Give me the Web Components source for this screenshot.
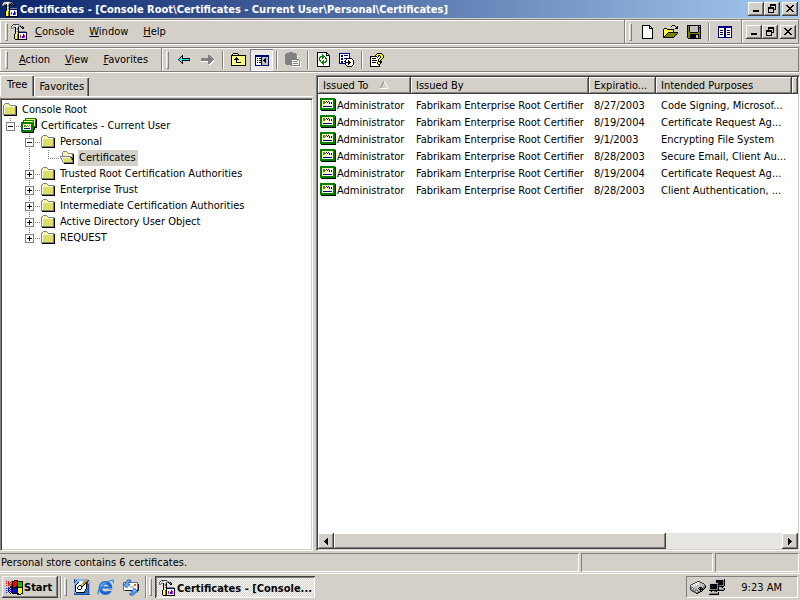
<!DOCTYPE html>
<html lang="en">
<head>
<meta charset="utf-8">
<title>Certificates</title>
<style>
:root{--face:#d4d0c8;--shade:#808080;--dark:#404040;--light:#fff;}
html,body{height:100%;margin:0}
body{font:11px/13px "DejaVu Sans Condensed","DejaVu Sans",sans-serif;color:#000;background:var(--face);display:flex;flex-direction:column;overflow:hidden}
main{flex:1;min-height:0;display:flex;gap:3px}
</style>
</head>
<body>
<title-bar>Certificates - [Console Root\Certificates - Current User\Personal\Certificates]</title-bar>
<tool-row>
  <tool-band grow><px-icon name="mmc"></px-icon><menu-item key="C">onsole</menu-item><menu-item key="W">indow</menu-item><menu-item key="H">elp</menu-item></tool-band>
  <tool-band tight><tool-button icon="new" label="New"></tool-button><tool-button icon="open" label="Open"></tool-button><tool-button icon="save" label="Save"></tool-button><tool-sep></tool-sep><tool-button icon="panes" label="New window"></tool-button></tool-band>
  <tool-band plain><window-buttons></window-buttons></tool-band>
</tool-row>
<tool-row>
  <tool-band class="menus"><menu-item key="A">ction</menu-item><menu-item key="V">iew</menu-item><menu-item key="F">avorites</menu-item></tool-band>
  <tool-band tight grow><tool-button icon="back" label="Back"></tool-button><tool-button icon="forward" label="Forward"></tool-button><tool-sep></tool-sep><tool-button icon="up" label="Up one level"></tool-button><tool-button icon="tree" label="Show console tree" pressed></tool-button><tool-sep></tool-sep><tool-button icon="paste" label="Paste"></tool-button><tool-sep></tool-sep><tool-button icon="refresh" label="Refresh"></tool-button><tool-button icon="export" label="Export list"></tool-button><tool-sep></tool-sep><tool-button icon="help" label="Help"></tool-button></tool-band>
</tool-row>
<main>
  <tree-pane>
    <tree-node icon="folder">Console Root</tree-node>
    <tree-node icon="certs" guides="e" box="-">Certificates - Current User</tree-node>
    <tree-node icon="folder" guides=" t" box="-">Personal</tree-node>
    <tree-node icon="folderopen" guides=" |e" selected>Certificates</tree-node>
    <tree-node icon="folder" guides=" t" box="+">Trusted Root Certification Authorities</tree-node>
    <tree-node icon="folder" guides=" t" box="+">Enterprise Trust</tree-node>
    <tree-node icon="folder" guides=" t" box="+">Intermediate Certification Authorities</tree-node>
    <tree-node icon="folder" guides=" t" box="+">Active Directory User Object</tree-node>
    <tree-node icon="folder" guides=" e" box="+">REQUEST</tree-node>
  </tree-pane>
  <cert-list></cert-list>
</main>
<status-bar>Personal store contains 6 certificates.</status-bar>
<task-bar>Certificates - [Console...</task-bar>

<script>
const PALETTE={K:'#000',W:'#fff',G:'#808080',L:'#c0c0c0',Y:'#ffff00',P:'#ffff84',F:'#dede63',O:'#808000',N:'#000080',E:'#008000',C:'#00ffff',R:'#ff0000',B:'#0000ff',M:'#ff00ff',A:'#87b4e8',S:'#f4f4a0',D:'#404040',T:'#2a78d8',V:'#00c800',Q:'#1c50a8',X:'#c89838',Z:'#ffff70'};
const ICONS={
mmc:`
..DDDDDD........
.DWLLWWLGG......
DWLLWWLGGKGK....
GLGGKWLK..KGK...
GG..KLGK...KK...
....KLGK........
....KWLK........
....KLGKGGGGGGG.
....KWLKNNNNNNNK
....KYPKWWWWWWWK
...KYPOKWWWWBWWK
...KYPOKWRWWBMWK
...KYPOKWRWBBMWK
...KYPOKWRWBBMWK
...KYYOKWWWWWWWK
....KKKKKKKKKKKK`,
new:`
KKKKKKKK....
KWWWWWWKK...
KWWWWWWKWK..
KWWWWWWKKKK.
KWWWWWWWWWK.
KWWWWWWWWWK.
KWWWWWWWWWK.
KWWWWWWWWWK.
KWWWWWWWWWK.
KWWWWWWWWWK.
KWWWWWWWWWK.
KWWWWWWWWWK.
KWWWWWWWWWK.
KKKKKKKKKKK.`,
open:`
.........KKK....
........K...K.K.
.............KK.
.KKK........KKK.
KPYPKKKKKKK.....
KYPYPYPYPYK.....
KPYPYPYPYPK.....
KYPYPKKKKKKKKKK.
KPYPKOOOOOOOOOK.
KYPKOOOOOOOOOK..
KPKOOOOOOOOOK...
KKOOOOOOOOOK....
KKKKKKKKKKK.....`,
save:`
KKKKKKKKKKKKKK
KOKLLLLLLLLKLK
KOKLLLLLLLLKKK
KOKLLLLLLLLKOK
KOKLLLLLLLLKOK
KOKLLLLLLLLKOK
KOKLLLLLLLLKOK
KOOKKKKKKKKOOK
KOOOOOOOOOOOOK
KOOKKKKKKKKKOK
KOOKKKKKKLLKOK
KOOKKKKKKLLKOK
KOOKKKKKKLLKOK
.KKKKKKKKKKKKK`,
panes:`
NNNNNNNNNNNNNN
NNNNNNNNNNNNNN
NWWWWWNNWWWWWN
NWWWWWNNWWWWWN
NWKKKWNNWKKKWN
NWWWWWNNWWWWWN
NWKKKWNNWKKKWN
NWWWWWNNWWWWWN
NWKKKWNNWKKKWN
NWWWWWNNWWWWWN
NWWWWWNNWWWWWN
NNNNNNNNNNNNNN`,
back:`
....K........
...KK........
..KCK........
.KCCKKKKKKKK.
KCCCCCCCCCCK.
.KCCKKKKKKKK.
..KCK........
...KK........
....K........`,
forward:`
.......GG.....
.......GGG....
.......GGGG...
GGGGGGGGGGGG..
GGGGGGGGGGGGG.
GGGGGGGGGGGGWW
WWWWWWWGGGGWW.
.......GGGWW..
.......GGWW...
........WW....`,
up:`
..KKKKK........
.KPPPPPK.......
KKKKKKKKKKKKKKK
KPPPPPPPPPPPPPK
KPPPPKPPPPPPPPK
KPPPKKKPPPPPPPK
KPPKKKKKPPPPPPK
KPPPPKPPPPPPPPK
KPPPPKPPPPPPPPK
KPPPPKKKKKPPPPK
KPPPPPPPPPPPPPK
KPPPPPPPPPPPPPK
KKKKKKKKKKKKKKK`,
tree:`
NNNNNNNNNNNNNN
NNNNNNNNNNNNNN
NWWWWWNLLLLLLN
NWKWKKNLLLKLLN
NWWWWWNLLKKLLN
NWKWKKNLKKKLLN
NWWWWWNLLKKLLN
NWKWKKNLLLKLLN
NWWWWWNLLLLLLN
NWWWWWNLLLLLLN
NNNNNNNNNNNNNN`,
paste:`
....GGGG........
.GGGGGGGGGG.....
GGGGGGGGGGGG....
GGGGGGGGGGGGW...
GGGGGGGGGGGGW...
GGGGGGGGGGGGW...
GGGGGGGGGGGGW...
GGGGGGGGGGGGGG..
GGGGGGGWWWWWGWG.
GGGGGGGWGGGGWWGW
GGGGGGGWWWWWWWGW
GGGGGGGWGGGGGWGW
.GGGGGGWWWWWWWGW
......GGGGGGGGGW
.......WWWWWWWWW`,
refresh:`
KKKKKKKKKK...
KWWWWWWWWKK..
KWWWWEWWWKWK.
KWWWWEEWWKKKK
KWWEEEEEWWWWK
KWEEWEEWEWWWK
KWEWWEWWEEWWK
KWEWWWWWWEWWK
KWEEWWEWWEWWK
KWWEWEEWEEWWK
KWWWEEEEEWWWK
KWWWWEEWWWWWK
KWWWWWEWWWWWK
KWWWWWWWWWWWK
KKKKKKKKKKKKK`,
export:`
NNNNNNNNNNN.....
NWWWWWWWWWN.....
NWNNWNNNNWN.....
NWNNWWWWWWN.....
NWWWWWWWWWN.....
NWNNWNNNKKKKK...
NWNNWWWKWWWWWK..
NWWWWWKWWKWWWWK.
NWNNWNKWWKKWWWK.
NWNNWWKKKKKKWWK.
NNNNNNKWWKKWWWK.
......KWWKWWWWK.
.......KWWWWWK..
........KKKKK...`,
help:`
.......KKKKK...
......KYYYYYK..
.....KYYKKYYYK.
KKKKKKKYKWKYYK.
KWWWWWWKWWKYYK.
KWKKKKWWWKYYK..
KWWWWWWWKYYK...
KWKKKKKWKYK....
KWWWWWWWKKKK...
KWKKKKWKYYKK...
KWWWWWWKYYK....
KWWWWWWWKK.....
KWWWWWWWWK.....
KKKKKKKKKK.....`,
folder:`
................
...GGGG.........
..GSSSSG........
.GSSSSSSGGGGGG..
.GWWWWWWWWWWWGK.
.GWFFFFFFFFFFGK.
.GWFFFFFFFFFFGK.
.GWFFFFFFFFFFGK.
.GWFFFFFFFFFFGK.
.GWFFFFFFFFFFGK.
.GWFFFFFFFFFFGK.
.GWFFFFFFFFFFGK.
.GGGGGGGGGGGGGK.
..KKKKKKKKKKKKK.`,
folderopen:`
................
....GGGG........
...GWSSSG.......
...GSSSSSGGGGG..
...GSWSWSWSWSGK.
...GWSWSWSWSWGK.
.GGGGGGGGGGGSGK.
.GWWWWWWWWWGKGK.
..GWFFFFFFFFGKK.
..GWFFFFFFFFGKK.
...GWFFFFFFFFGK.
...GWFFFFFFFFGK.
....GGGGGGGGGGK.
.....KKKKKKKKKK.`,
certs:`
....EEEEEEEEEEE.
....EZWZWZWZWZEK
..EEEEEEEEEEEWEK
..EZWZWZWZWZEZEK
EEEEEEEEEEEEEWEK
EEEEEEEEEEEEEZEK
EEWZWWWZWWEEEWEK
EEZOOWGWGWEEEZEK
EEWOOGWGWZEEEEEK
EEZWWWWZWWEEEKKK
EEWNNNNNNWEEEK..
EEWWZWWWZWEEKK..
EEEEEEEEEEEEK...
EEEEEEEEEEEEK...
.KKKKKKKKKKKK...`,
cert:`
EEEEEEEEEEEEEEE.
EEEEEEEEEEEEEEEK
EEWWZWWWZWWWZEEK
EEZOOWNWNWWWWEEK
EEWOOOWNWNWNWEEK
EEWOOWZWWNWNZEEK
EEZWWWWWWWWWWEEK
EEWWZWWWZWWZWEEK
EEWNNNNNNNNNWEEK
EEZWWZWWWZWWZEEK
EEEEEEEEEEEEEEEK
EEEEEEEEEEEEEEEK
.KKKKKKKKKKKKKKK`,
flag:`
........KKKK.....
R.R..RKKRRRKKKKKK
..R.R.KRRRRKVVVVK
R.RR.RKRRRRKVVVVK
..R.RRKRRRRKVVVVK
R.RR.RKRRRRKVVVVK
....KKKRRRKKVVVVK
..B.KKKKKKKKKKKKK
B.BB.BKBBBBKYYYYK
..B.BBKBBBBKYYYYK
B.BB.BKBBBBKYYYYK
..B.BBKBBBBKYYYYK
B..B.BKBBBBKYYYYK
....K.KKKKKKKYYKK
...........KKKK..`,
desktop:`
QAAAAAAAAAAAXX..
QAQAAAAAAAAXXXK.
QQAAAWWWWAXXXKAA
QAAAKWWWWXXXKQAA
AAAKWWWWXXXKKQAA
AAKWWWWXYXKWKQQA
AKWWWKKXXKWWKTQA
AKWWKWWKKWWWKTQA
AKWKWWWKWWWWKTQA
AKWKWWWKWWWWKTQA
AKWWKKKWWWWKTTQA
AKWWWWWWWWWKTTQA
AKWWWWWWWWKTTTQA
AAKKKKKKKKKTTTQA
QATTTTTTTTTTTTQA
QQQQQQQQQQQQQQQQ`,
card:`
.......DDD.......
.....DDWWLDD.....
...DDWWLWLLLDD...
.DDWWLWLWLLLLLD..
DWWLWLWLLLLLLLGD.
DLLLWLLLLLLLLGGK.
DGGLLLLLLKKKLGGK.
DGWGGLLLKGKGKGK..
DGGGWGGLLKKKKK...
.DGGGGGGLLKGK....
..DDGGWGGGKK.....
....DDGGKK.......
......KK.........`,
net:`
......LLLLLLLLLK
......LKKKKKKKGK
......LKKKKKKKGK
......LKKQKKKKGK
LLLLLLLLLKKKKKGK
LKKKKKKKGKKKKKGK
LKKKKKKKGKGGGGGK
LKKQKKKKGKKKKKK.
LKKKKKKKGKLLGK..
LKKKKKKKGKLLLLGK
LGGGGGGGGKGGGGGK
KKKKKKKKKKKKKKK.
..KLLGGK........
LLLLLLLLLK......
LGGGGGVGGK......
KKKKKKKKKK......`
};
const VECTOR={
sort:`<svg width="9" height="8" viewBox="0 0 9 8"><path d="M4 0L.5 7" fill="none" stroke="#808080"/><path d="M4 0L8.3 7.5H0" fill="none" stroke="#fff"/></svg>`,
ie:`<svg width="18" height="17" viewBox="0 0 18 17"><circle cx="8.5" cy="9" r="5.2" fill="none" stroke="#1c68d0" stroke-width="3.4"/><path d="M9 9.5H16" stroke="#d4d0c8" stroke-width="1"/><path d="M10 12H17V10.5H10Z" fill="#d4d0c8"/><path d="M4 8.5H15" stroke="#1c68d0" stroke-width="2"/><path d="M3.5 8Q4.5 4.5 9 4" fill="none" stroke="#68b8ff" stroke-width="1.5"/><path d="M1.5 15.5Q-.5 12.5 5 7.5Q12 .5 16 1.5Q17 2 16 4" fill="none" stroke="#3088e8" stroke-width="1.3"/></svg>`,
mail:`<svg width="17" height="17" viewBox="0 0 17 17"><path d="M1.5 3.5H15.5V11.5H1.5Z" fill="#fff" stroke="#707070"/><path d="M3 11.5H16.5V5" fill="none" stroke="#202020"/><path d="M12 5h2v2h-2z" fill="#e06020"/><path d="M8 8h4" stroke="#909090"/><path d="M8.5 1Q4 0 3.5 5L1 5L4.500 9L8 5.5L6 5Q6 3 9 2.5Z" fill="#68b0ff" stroke="#1850a8" stroke-width=".8"/><path d="M8 16Q13 17 13.5 13H16L12.5 9L9 12.5L11 13Q11 14.5 8 14.5Z" fill="#68b0ff" stroke="#1850a8" stroke-width=".8"/></svg>`,
min:`<svg width="6" height="7" viewBox="0 0 6 7"><path d="M0 5h6v2H0z"/></svg>`,
restore:`<svg width="8" height="9" viewBox="0 0 8 9"><path fill-rule="evenodd" d="M2 0h6v6H6V9H0V3h2zM3 2v1h3v2h1V2zM1 5v3h4V5z"/></svg>`,
close:`<svg width="8" height="7" viewBox="0 0 8 7"><path d="M0 0h2v1h1v1h2V1h1V0h2v1H7v1H6v1H5v1h1v1h1v1h1v1H6V6H5V5H3v1H2v1H0V6h1V5h1V4h1V3H2V2H1V1H0z"/></svg>`,
left:`<svg width="4" height="7" viewBox="0 0 4 7"><path d="M4 0v7H3V6H2V5H1V4H0V3h1V2h1V1h1V0z"/></svg>`,
right:`<svg width="4" height="7" viewBox="0 0 4 7"><path d="M0 0v7h1V6h1V5h1V4h1V3H3V2H2V1H1V0z"/></svg>`
};
function iconSvg(name){
  if(VECTOR[name])return VECTOR[name];
  const rows=ICONS[name].trim().split('\n'),paths={};
  const w=Math.max(...rows.map(r=>r.length));
  rows.forEach((r,y)=>{for(let x=0;x<r.length;){let c=r[x],n=1;while(r[x+n]===c)n++;if(c!=='.')paths[c]=(paths[c]||'')+`M${x} ${y}h${n}v1h-${n}z`;x+=n}});
  return `<svg width="${w}" height="${rows.length}" viewBox="0 0 ${w} ${rows.length}" shape-rendering="crispEdges">${Object.entries(paths).map(([c,d])=>`<path fill="${PALETTE[c]}" d="${d}"/>`).join('')}</svg>`;
}
const BASE=`:host,*{box-sizing:border-box}button{font:inherit;color:inherit;background:none;border:0;padding:0;margin:0}
.raised{background:var(--face);box-shadow:inset -1px -1px var(--dark),inset 1px 1px var(--light),inset -2px -2px var(--shade)}`;
function define(tag,css,html){
  customElements.define(tag,class extends HTMLElement{
    connectedCallback(){
      if(this.shadowRoot)return;
      this.attachShadow({mode:'open'}).innerHTML=`<style>${BASE}${css}</style>${typeof html==='function'?html(this):html}`;
    }
  });
}
define('px-icon',`:host{display:inline-flex;flex:none}svg{display:block}`,e=>iconSvg(e.getAttribute('name')));
define('window-buttons',`:host{display:flex;flex:none}button{width:16px;height:14px;display:flex;justify-content:center;align-items:center;padding:0 1px 1px 0}button:last-child{margin-left:2px}`,
 `<button class="raised" aria-label="Minimize"><px-icon name="min"></px-icon></button><button class="raised" aria-label="Restore"><px-icon name="restore"></px-icon></button><button class="raised" aria-label="Close"><px-icon name="close"></px-icon></button>`);
define('title-bar',`:host{display:flex;align-items:center;flex:none;height:18px;padding:0 2px;gap:2px;background:linear-gradient(90deg,#0a246a,#a6caf0);color:#fff;font-weight:bold}h1{flex:1;font:inherit;margin:0;white-space:nowrap;overflow:hidden}window-buttons{color:#000}`,
 `<px-icon name="mmc"></px-icon><h1><slot></slot></h1><window-buttons></window-buttons>`);
define('tool-row',`:host{display:flex;flex:none;height:25px;margin:1px 1px 2px 0;border:solid var(--shade);border-width:1px 1px 1px 0;box-shadow:inset 0 1px var(--light),0 1px var(--light)}`,`<slot></slot>`);
define('tool-band',`:host{display:flex;align-items:center;padding:0 6px 0 4px;border-left:1px solid var(--light)}:host(:not(:last-child)){border-right:1px solid var(--shade)}:host([grow]){flex:1}
.grip{width:3px;height:18px;border:1px solid var(--light);border-right-color:var(--shade);border-bottom-color:var(--shade);margin-right:3px;flex:none}:host([tight]) .grip{margin:0 4px 0 -1px}:host([plain]) .grip{display:none}:host([plain]){padding:0 2px 0 3px}:host([tight]){padding-right:5px}`,
 `<span class="grip"></span><slot></slot>`);
define('menu-item',`:host{display:block}button{padding:2px 7px 3px 8px;white-space:nowrap}u{text-underline-offset:1px}`,e=>`<button><u>${e.getAttribute('key')}</u><slot></slot></button>`);
define('tool-button',`:host{display:block}button{width:23px;height:22px;display:flex;align-items:center;justify-content:center}:host([pressed]) button{background:#ebe9e5;box-shadow:inset 1px 1px var(--shade),inset -1px -1px var(--light);padding:1px 0 0 1px}`,
 e=>`<button aria-label="${e.getAttribute('label')}"><px-icon name="${e.getAttribute('icon')}"></px-icon></button>`);
define('tool-sep',`:host{width:2px;height:18px;margin:0 3px;border-left:1px solid var(--shade);border-right:1px solid var(--light)}`,'');
define('tree-pane',`:host{display:flex;flex-direction:column;flex:none;width:313px;padding-top:1px}
.tabs{display:flex;align-items:flex-end;height:21px}
button{height:19px;padding:0 5px 1px 4px;border:solid var(--light);border-width:1px 0 0 1px;box-shadow:inset -1px 0 var(--dark),inset -2px 0 var(--shade)}
button[aria-selected=true]{height:21px;padding:0 7px 3px 6px}
.line{height:2px;border-top:1px solid var(--light);margin-left:36px}
.tree{flex:1;background:#fff;border:1px solid var(--light);border-top-color:var(--shade);border-left-color:var(--shade);box-shadow:inset 1px 1px var(--dark),inset -1px -1px var(--face);padding:3px 2px 2px 1px;overflow:hidden}`,
 `<div class="tabs" role="tablist"><button role="tab" aria-selected="true">Tree</button><button role="tab">Favorites</button></div><div class="line"></div><div class="tree" role="tree"><slot></slot></div>`);
define('tree-node',`:host{display:flex;height:16px;align-items:center;white-space:nowrap}
.g{width:19px;height:16px;flex:none;display:flex;align-items:center;padding-left:4px;
--v:repeating-linear-gradient(180deg,#808080 0 1px,transparent 1px 2px);--h:repeating-linear-gradient(90deg,#808080 0 1px,transparent 1px 2px)}
.v{background:var(--v) 8px 0/1px 16px no-repeat}.t{background:var(--v) 8px 0/1px 16px no-repeat,var(--h) 8px 8px/11px 1px no-repeat}.e{background:var(--v) 8px 0/1px 9px no-repeat,var(--h) 8px 8px/11px 1px no-repeat}
button{width:9px;height:9px;border:1px solid #808080;background:#fff linear-gradient(#000,#000) 1px 3px/5px 1px no-repeat;display:block;margin-top:1px}
button.plus{background:linear-gradient(#000,#000) 1px 3px/5px 1px no-repeat,linear-gradient(#000,#000) 3px 1px/1px 5px no-repeat,#fff}
.i{width:16px;flex:none;align-self:flex-start}.l{margin-left:3px;padding:1px 2px 2px 1px}:host([selected]) .l{background:var(--face)}`,
 e=>{const g=e.getAttribute('guides')||'',b=e.getAttribute('box');
 return [...g].map((c,i)=>`<span class="g ${c==='|'?'v':c}">${b&&i===g.length-1?`<button aria-label="${b==='+'?'Expand':'Collapse'}" class="${b==='+'?'plus':''}"></button>`:''}</span>`).join('')+`<px-icon class="i" name="${e.getAttribute('icon')}"></px-icon><span class="l" role="treeitem"><slot></slot></span>`});
define('scroll-bar',`:host{display:flex;flex:none;height:16px;background:#e8e6e2}button{width:16px;display:flex;align-items:center;justify-content:center;flex:none}.track{flex:1;display:flex}.thumb{width:74%}`,
 `<button class="raised" aria-label="Scroll left"><px-icon name="left"></px-icon></button><div class="track"><div class="thumb raised"></div></div><button class="raised" aria-label="Scroll right"><px-icon name="right"></px-icon></button>`);
const CERTS=[['8/27/2003','Code Signing, Microsof...'],['8/19/2004','Certificate Request Ag...'],['9/1/2003','Encrypting File System'],['8/28/2003','Secure Email, Client Au...'],['8/19/2004','Certificate Request Ag...'],['8/28/2003','Client Authentication, ...']];
define('cert-list',`:host{flex:1;min-width:0;display:flex;flex-direction:column;background:#fff;border:1px solid var(--light);border-top-color:var(--shade);border-left-color:var(--shade);box-shadow:inset 1px 1px var(--dark),inset -1px -1px var(--face);padding:1px;margin-top:1px}
.view{flex:1;overflow:hidden}table{table-layout:fixed;width:100%;border-collapse:separate;border-spacing:0}
th,td{font-weight:normal;text-align:left;white-space:nowrap;overflow:hidden;padding:0 0 0 5px}
th{height:17px}.sort{margin-left:12px}
tbody::before{content:"";display:block;height:3px}td{height:17px}td:first-child{padding-left:2px}.n{display:flex;align-items:center;gap:1px}.n px-icon{margin-bottom:3px}`,
 `<div class="view"><table><colgroup><col style="width:93px"><col style="width:178px"><col style="width:67px"><col style="width:136px"><col></colgroup><thead><tr><th class="raised">Issued To<px-icon class="sort" name="sort"></px-icon></th><th class="raised">Issued By</th><th class="raised">Expiratio...</th><th class="raised">Intended Purposes</th><th class="raised"></th></tr></thead><tbody>${CERTS.map(c=>`<tr><td><span class="n"><px-icon name="cert"></px-icon>Administrator</span></td><td>Fabrikam Enterprise Root Certifier</td><td>${c[0]}</td><td>${c[1]}</td></tr>`).join('')}</tbody></table></div><scroll-bar></scroll-bar>`);
define('status-bar',`:host{display:flex;flex:none;gap:2px;height:19px;margin:2px 1px 1px 0}div{border:1px solid var(--shade);border-right-color:var(--light);border-bottom-color:var(--light);padding:2px 1px}.a{flex:1;border-left:0}.b{width:132px}.c{width:84px}`,
 `<div class="a" role="status"><slot></slot></div><div class="b"></div><div class="c"></div>`);
define('task-bar',`:host{display:flex;align-items:center;flex:none;height:27px;border-top:1px solid var(--light);padding:1px 2px;font-weight:bold}
button{height:22px;display:flex;align-items:center}
.start{padding:0 5px 0 4px;gap:1px;width:56px}
.div{width:2px;height:22px;border-left:1px solid var(--shade);border-right:1px solid var(--light);margin:0 2px}
.grip{width:3px;height:18px;border:1px solid var(--light);border-right-color:var(--shade);border-bottom-color:var(--shade)}
.q{display:flex;gap:7px;margin:0 4px 0 7px}
.task{width:160px;margin-left:3px;padding:2px 0 0 4px;gap:2px;white-space:nowrap;overflow:hidden;box-shadow:inset 1px 1px var(--dark),inset -1px -1px var(--light),inset 2px 2px var(--shade);background:repeating-conic-gradient(#fff 0 25%,#d4d0c8 0 50%) 0 0/2px 2px}
.tray{margin-left:auto;display:flex;align-items:center;height:22px;width:112px;padding:0 15px 0 3px;gap:2px;border:1px solid var(--shade);border-right-color:var(--light);border-bottom-color:var(--light);font-weight:normal}time{margin-left:auto;white-space:nowrap}`,
 `<button class="start raised"><px-icon name="flag"></px-icon>Start</button><span class="div"></span><span class="grip"></span><span class="q"><button aria-label="Show desktop"><px-icon name="desktop"></px-icon></button><button aria-label="Internet Explorer"><px-icon name="ie"></px-icon></button><button aria-label="Outlook Express"><px-icon name="mail"></px-icon></button></span><span class="div"></span><span class="grip"></span><button class="task"><px-icon name="mmc"></px-icon><slot></slot></button><div class="tray"><px-icon name="card"></px-icon><px-icon name="net"></px-icon><time>9:23 AM</time></div>`);
</script>
</body>
</html>
